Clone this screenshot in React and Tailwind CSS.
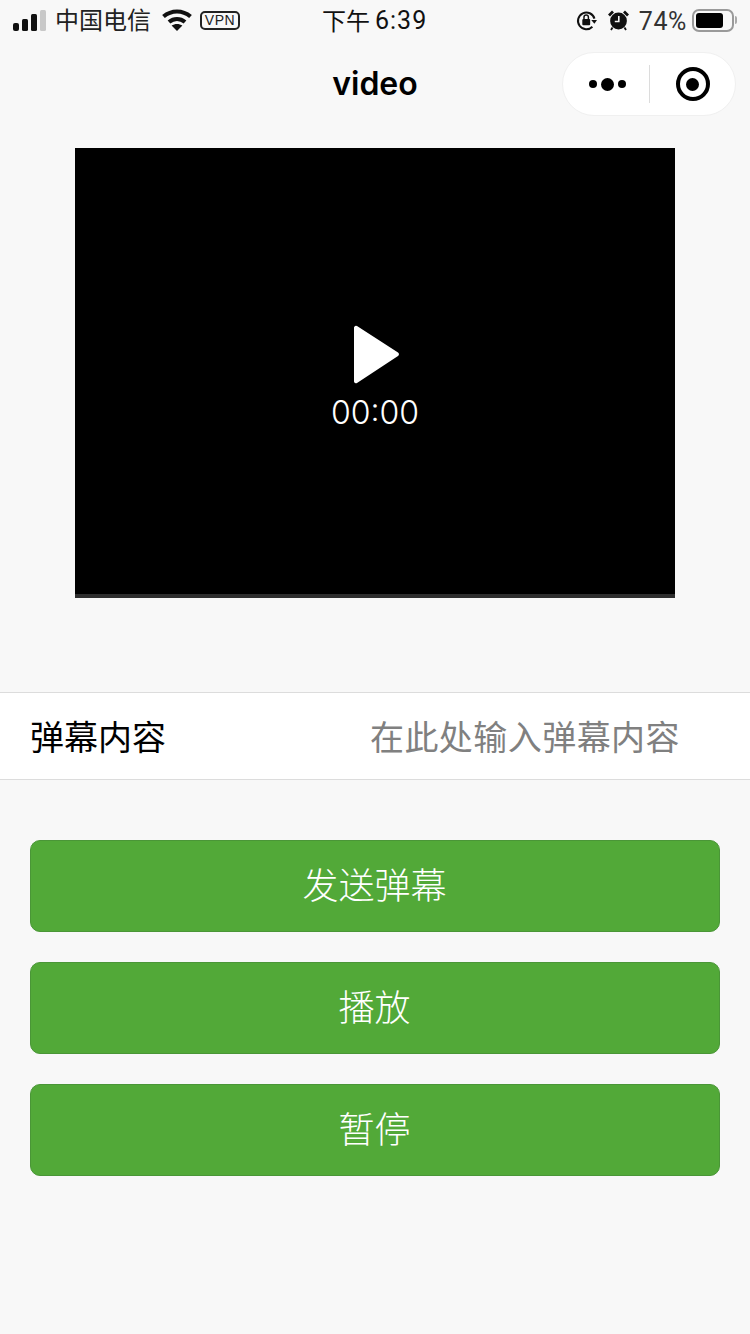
import React from "react";

const cjk = { fontFamily: '"Noto Sans CJK SC", sans-serif' };

function Signal() {
  return (
    <svg width="34" height="21" viewBox="0 0 34 21" className="block">
      <rect x="0" y="13" width="6" height="8" rx="2" fill="#111" />
      <rect x="9" y="9" width="6" height="12" rx="1.5" fill="#111" />
      <rect x="18" y="4" width="6" height="17" rx="1.5" fill="#111" />
      <rect x="27" y="0" width="6" height="21" rx="1.5" fill="#c8c8c8" />
    </svg>
  );
}

function Wifi() {
  return (
    <svg width="30" height="22" viewBox="0 0 30 22" className="block">
      <path d="M1.5 7.5C9.5 0.8 20.5 0.8 28.5 7.5" stroke="#111" strokeWidth="4.2" fill="none" />
      <path d="M7 13C11.8 9 18.2 9 23 13" stroke="#111" strokeWidth="4.2" fill="none" />
      <path d="M15 22L9.6 16.6C12.8 14.4 17.2 14.4 20.4 16.6Z" fill="#111" />
    </svg>
  );
}

function Rotation() {
  return (
    <svg width="21" height="21" viewBox="0 0 20 20" className="block">
      <path d="M17.6 8.2A8 8 0 1 0 15.6 16" stroke="#111" strokeWidth="1.9" fill="none" />
      <path d="M14.5 9.5H20L17.5 13Z" fill="#111" />
      <rect x="6" y="8.5" width="7.5" height="6" rx="1" fill="#111" />
      <path d="M7.6 9V6.9a2.1 2.1 0 0 1 4.2 0V9" stroke="#111" strokeWidth="1.4" fill="none" />
    </svg>
  );
}

function Alarm() {
  return (
    <svg width="21" height="21" viewBox="0 0 21 21" className="block">
      <circle cx="10.5" cy="11" r="8.4" fill="#111" />
      <path d="M1 5.500L5 1.500M20 5.500L16 1.500" stroke="#111" strokeWidth="2.8" />
      <path d="M4.500 17.500L3 20M16.500 17.500L18 20" stroke="#111" strokeWidth="1.8" />
      <path d="M10.800 6v5.500H6.800" stroke="#f8f8f8" strokeWidth="1.6" fill="none" />
    </svg>
  );
}

function StatusBar() {
  return (
    <div className="flex h-10 items-center justify-between pl-[13px] pr-[13px]">
      <div className="flex flex-1 items-center">
        <Signal />
        <span className="relative top-[-1px] ml-[8px] text-[24px] leading-none text-[#222]" style={cjk}>中国电信</span>
        <span className="ml-[11px]"><Wifi /></span>
        <span className="ml-[8px] flex h-[19px] w-[40px] items-center justify-center rounded-[5px] border-2 border-[#222] text-[14px] leading-none tracking-[0.6px] text-[#222] [font-family:'Liberation_Sans',sans-serif]">VPN</span>
      </div>
      <div className="absolute left-[322px] top-[8px] flex items-center text-[24px] leading-none text-[#111]" style={cjk}>
        <span className="relative top-[-1px]">下午</span>
        <span className="ml-[5px] text-[25px] tracking-[1px] [font-family:Roboto,sans-serif]">6:39</span>
      </div>
      <div className="flex items-center">
        <span className="relative left-[-1px]"><Rotation /></span>
        <span className="ml-[10px]"><Alarm /></span>
        <span className="relative top-[1px] ml-[10px] text-[25px] leading-none tracking-[0.6px] text-[#333] [font-family:Roboto,sans-serif]">74%</span>
        <div className="ml-[5px] flex h-[23px] w-[42px] items-center rounded-[7px] border-2 border-[#9a9a9a] p-[2px]">
          <div className="h-[15px] w-[27px] rounded-[3px] bg-black" />
        </div>
        <div className="ml-[1px] h-[8px] w-[2px] rounded-r bg-[#aaa]" />
      </div>
    </div>
  );
}

function NavBar() {
  return (
    <div className="relative flex h-[88px] items-center justify-center">
      <span className="text-[32px] font-semibold leading-none text-black [font-family:Inter,sans-serif]">video</span>
      <div className="absolute left-[562px] top-[12px] flex h-[64px] w-[174px] items-center rounded-full border border-[#f0f0f0] bg-white">
        <div className="flex w-[86px] items-center justify-center gap-[4px] pl-[3px]">
          <span className="h-[8px] w-[8px] rounded-full bg-black" />
          <span className="h-[13px] w-[13px] rounded-full bg-black" />
          <span className="h-[8px] w-[8px] rounded-full bg-black" />
        </div>
        <div className="h-[38px] w-px bg-[#dcdcdc]" />
        <div className="flex flex-1 items-center justify-center">
          <div className="flex h-[34px] w-[34px] items-center justify-center rounded-full border-[4px] border-black">
            <span className="h-[13px] w-[13px] rounded-full bg-black" />
          </div>
        </div>
      </div>
    </div>
  );
}

function Video() {
  return (
    <div className="mx-auto mt-[20px] flex h-[450px] w-[600px] flex-col bg-black">
      <div className="flex flex-1 flex-col items-center pt-[177px]">
        <svg width="48" height="60" viewBox="0 0 48 60" className="block">
          <path d="M3 2.500V56.500a2 2 0 0 0 3 1.500L47 31a2 2 0 0 0 0-3.400L6 1a2 2 0 0 0-3 1.500Z" fill="#fff" />
        </svg>
        <span className="mt-[12px] text-[32px] font-light leading-none text-white [font-family:Inter,sans-serif]">00:00</span>
      </div>
      <div className="h-[4px] bg-[#2e2e2e]" />
    </div>
  );
}

function Btn({ children }) {
  return (
    <button className="flex h-[92px] w-full items-center justify-center rounded-[10px] border border-[#4a9637] bg-[#52a938] pb-[7px] pr-[1px] text-[36px] font-light leading-none text-white" style={cjk}>
      {children}
    </button>
  );
}

export default function App() {
  return (
    <div className="relative min-h-[1334px] w-[750px] overflow-hidden bg-[#f8f8f8]">
      <StatusBar />
      <NavBar />
      <Video />
      <div className="mt-[94px] flex h-[88px] items-center justify-between border-y border-[#dcdcdc] bg-white pl-[30px] pr-[70px]" style={cjk}>
        <span className="text-[34px] leading-none text-black">弹幕内容</span>
        <span className="text-[34px] leading-none tracking-[0.45px] text-[#808080]">在此处输入弹幕内容</span>
      </div>
      <div className="mt-[60px] flex flex-col gap-[30px] px-[30px]">
        <Btn>发送弹幕</Btn>
        <Btn>播放</Btn>
        <Btn>暂停</Btn>
      </div>
    </div>
  );
}
